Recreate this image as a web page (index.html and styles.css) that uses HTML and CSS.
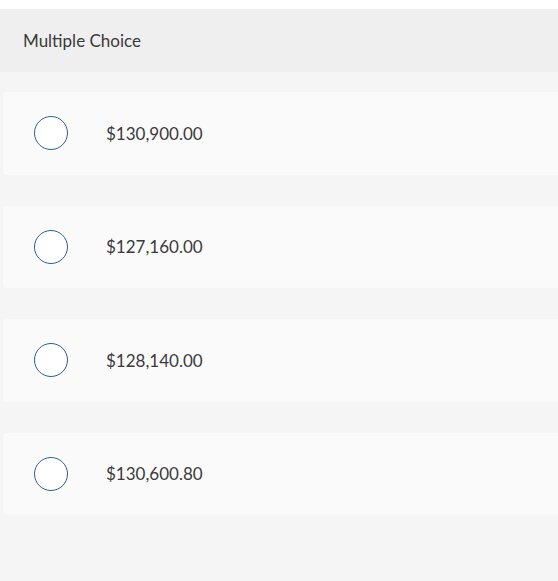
FILE: index.html
```html
<!DOCTYPE html>
<html>
<head>
<meta charset="utf-8">
<link rel="stylesheet" href="styles.css">
</head>
<body>
<div class="page">
  <div class="header">Multiple Choice</div>
  <div class="options">
    <label class="option"><span class="radio"></span><span class="label">$130,900.00</span></label>
    <label class="option"><span class="radio"></span><span class="label">$127,160.00</span></label>
    <label class="option"><span class="radio"></span><span class="label">$128,140.00</span></label>
    <label class="option"><span class="radio"></span><span class="label">$130,600.80</span></label>
  </div>
</div>
</body>
</html>
```
FILE: styles.css
```css
html, body {
  margin: 0;
  padding: 0;
  background: #ffffff;
}
.page {
  padding-top: 9px;
  background: #ffffff;
  font-family: Lato, "Open Sans", sans-serif;
  color: #333333;
}
.header {
  height: 63px;
  background: #efefef;
  display: flex;
  align-items: center;
  padding-left: 23px;
  font-size: 17px;
  color: #3a3a3a;
}
.options {
  background: #f5f5f5;
  padding: 20px 0 66px 3px;
  display: flex;
  flex-direction: column;
  gap: 31px;
}
.option {
  height: 82.5px;
  background: #fafafa;
  border-radius: 4px 0 0 4px;
  display: flex;
  align-items: center;
}
.radio {
  width: 32px;
  height: 32px;
  border: 1.5px solid #2d5e94;
  border-radius: 50%;
  background: #fff;
  margin-left: 31px;
  flex: none;
}
.label {
  margin-left: 38px;
  font-size: 17px;
  color: #3a3a3a;
}
```
